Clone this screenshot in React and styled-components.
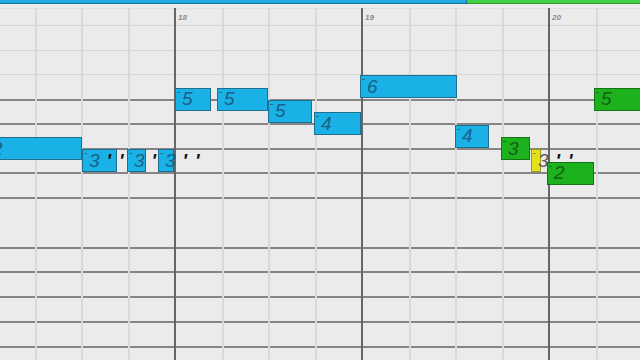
import React from 'react';
import styled, { createGlobalStyle } from 'styled-components';

const BAR_H = 4;
const ROW = 12.375;
const BASE = 99;

const Global = createGlobalStyle`
    html, body {
        margin: 0;
        padding: 0;
        background: #ebebeb;
    }
    body {
        font-family: "Liberation Sans", Arial, sans-serif;
    }
`;

const Screen = styled.div`
    width: 640px;
    height: 360px;
    display: flex;
    flex-direction: column;
    overflow: hidden;
    background: #ebebeb;
`;

const TopBar = styled.div`
    display: flex;
    height: ${BAR_H}px;
    flex-shrink: 0;
`;

const Segment = styled.div`
    height: 3px;
    width: ${p => p.$w ? `${p.$w}px` : 'auto'};
    flex: ${p => p.$w ? '0 0 auto' : '1'};
    background: ${p => p.$fill};
    border-bottom: 1px solid ${p => p.$edge};
    border-right: ${p => p.$w ? `1px solid ${p.$edge}` : '0'};
`;

const Canvas = styled.div`
    position: relative;
    flex: 1;
`;

const HLine = styled.div`
    position: absolute;
    left: 0;
    right: 0;
    height: ${p => p.$tone === 'dark' ? 2 : 1}px;
    background: ${p => p.$tone === 'dark' ? '#858585' : p.$tone === 'light' ? '#d6d6d6' : '#e0e0e0'};
`;

const Beat = styled.div`
    position: absolute;
    top: 4px;
    bottom: 0;
    width: 2px;
    background: #d9d9d9;
`;

const Measure = styled.div`
    position: absolute;
    top: 4px;
    bottom: 0;
    width: 2px;
    background: #666;
`;

const MeasureNum = styled.span`
    position: absolute;
    left: 4px;
    top: 5px;
    font: italic bold 8px "Liberation Sans", Arial, sans-serif;
    color: #8a8a8a;
`;

const palette = {
    blue: { fill: '#19b1e6', edge: '#1f6f8f', text: '#1d5f85' },
    green: { fill: '#1db21d', edge: '#137513', text: '#136013' },
    yellow: { fill: '#e4e01e', edge: '#9c9818', text: '#5a5a5a' },
};

const Note = styled.div`
    position: absolute;
    height: 23px;
    box-sizing: border-box;
    display: flex;
    align-items: center;
    padding-left: 6px;
    white-space: nowrap;
    background: ${p => palette[p.$kind].fill};
    border: 1px solid ${p => palette[p.$kind].edge};
    &::before {
        content: '';
        position: absolute;
        left: 1px;
        top: 3px;
        width: 3px;
        height: 1px;
        background: ${p => palette[p.$kind].edge};
    }
`;

const Fret = styled.span`
    flex-shrink: 0;
    font: italic 19px "Liberation Sans", Arial, sans-serif;
    color: ${p => palette[p.$kind].text};
`;

const Tick = styled.span`
    flex-shrink: 0;
    font: italic bold 19px "Liberation Sans", Arial, sans-serif;
    color: #141414;
    margin-left: ${p => p.$gap}px;
`;

const lines = [
    { y: 8, tone: 'faint' },
    { y: 25, tone: 'light' },
    { y: 49.5, tone: 'light' },
    { y: 74, tone: 'light' },
    { y: 98.5, tone: 'dark' },
    { y: 123, tone: 'dark' },
    { y: 147.5, tone: 'dark' },
    { y: 172, tone: 'dark' },
    { y: 196.5, tone: 'dark' },
    { y: 246.5, tone: 'dark' },
    { y: 271, tone: 'dark' },
    { y: 296, tone: 'dark' },
    { y: 320.5, tone: 'dark' },
    { y: 345.5, tone: 'dark' },
];

const beats = [34.5, 81, 127.5, 221.5, 268, 314.5, 408.5, 455, 501.5, 595.5];

const measures = [
    { x: 174, n: 18 },
    { x: 361, n: 19 },
    { x: 548, n: 20 },
];

const notes = [
    { x: -15, w: 97, k: 4, kind: 'blue', fret: '2' },
    { x: 82, w: 35, k: 5, kind: 'blue', fret: '3', triplet: true },
    { x: 127, w: 19, k: 5, kind: 'blue', fret: '3', triplet: true },
    { x: 158, w: 16, k: 5, kind: 'blue', fret: '3', triplet: true },
    { x: 175, w: 36, k: 0, kind: 'blue', fret: '5' },
    { x: 217, w: 51, k: 0, kind: 'blue', fret: '5' },
    { x: 268, w: 44, k: 1, kind: 'blue', fret: '5' },
    { x: 314, w: 47, k: 2, kind: 'blue', fret: '4' },
    { x: 360, w: 97, k: -1, kind: 'blue', fret: '6' },
    { x: 455, w: 34, k: 3, kind: 'blue', fret: '4' },
    { x: 501, w: 29, k: 4, kind: 'green', fret: '3' },
    { x: 531, w: 10, k: 5, kind: 'yellow', fret: '3', triplet: true },
    { x: 547, w: 47, k: 6, kind: 'green', fret: '2' },
    { x: 594, w: 60, k: 0, kind: 'green', fret: '5' },
];

function NoteBlock({ x, w, k, kind, fret, triplet }) {
    const top = BASE + k * ROW - 11.5 - BAR_H;
    return (
        <Note $kind={kind} style={{ left: x, top, width: w }}>
            <Fret $kind={kind}>{fret}</Fret>
            {triplet && <Tick $gap={7}>'</Tick>}
            {triplet && <Tick $gap={8}>'</Tick>}
        </Note>
    );
}

export default function App() {
    return (
        <>
            <Global />
            <Screen>
                <TopBar>
                    <Segment $w={466} $fill="#22a7de" $edge="#13739f" />
                    <Segment $fill="#44cf44" $edge="#279a27" />
                </TopBar>
                <Canvas>
                    {lines.map(l => (
                        <HLine key={l.y} $tone={l.tone} style={{ top: l.y - BAR_H }} />
                    ))}
                    {beats.map(b => (
                        <Beat key={b} style={{ left: b }} />
                    ))}
                    {measures.map(m => (
                        <Measure key={m.n} style={{ left: m.x }}>
                            <MeasureNum>{m.n}</MeasureNum>
                        </Measure>
                    ))}
                    {notes.map((n, i) => (
                        <NoteBlock key={i} {...n} />
                    ))}
                </Canvas>
            </Screen>
        </>
    );
}
